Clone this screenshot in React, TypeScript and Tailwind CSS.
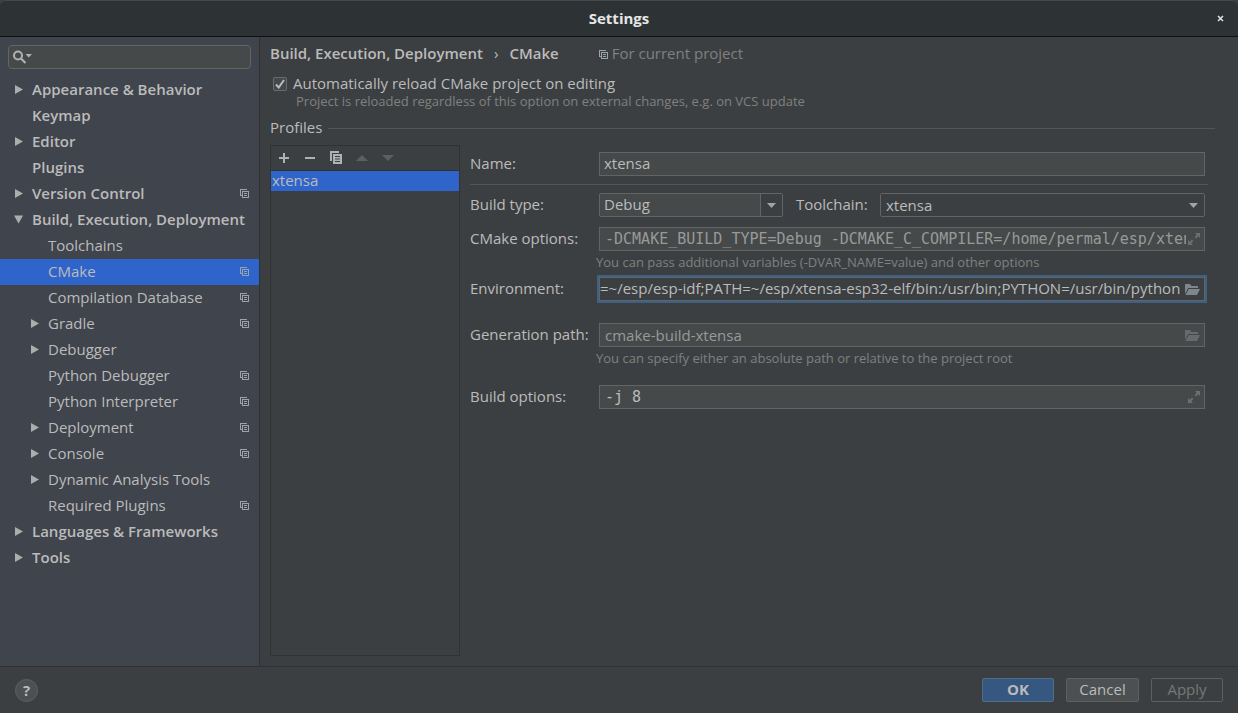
import React, { useState } from 'react';

type TreeItem = {
  label: string;
  level: number;
  arrow?: 'right' | 'down';
  perProject?: boolean;
};

const TREE: TreeItem[] = [
  { label: 'Appearance & Behavior', level: 0, arrow: 'right' },
  { label: 'Keymap', level: 0 },
  { label: 'Editor', level: 0, arrow: 'right' },
  { label: 'Plugins', level: 0 },
  { label: 'Version Control', level: 0, arrow: 'right', perProject: true },
  { label: 'Build, Execution, Deployment', level: 0, arrow: 'down' },
  { label: 'Toolchains', level: 1 },
  { label: 'CMake', level: 1, perProject: true },
  { label: 'Compilation Database', level: 1, perProject: true },
  { label: 'Gradle', level: 1, arrow: 'right', perProject: true },
  { label: 'Debugger', level: 1, arrow: 'right' },
  { label: 'Python Debugger', level: 1, perProject: true },
  { label: 'Python Interpreter', level: 1, perProject: true },
  { label: 'Deployment', level: 1, arrow: 'right', perProject: true },
  { label: 'Console', level: 1, arrow: 'right', perProject: true },
  { label: 'Dynamic Analysis Tools', level: 1, arrow: 'right' },
  { label: 'Required Plugins', level: 1, perProject: true },
  { label: 'Languages & Frameworks', level: 0, arrow: 'right' },
  { label: 'Tools', level: 0, arrow: 'right' },
];

/** Small "stored per project" marker */
function ProjectIcon({ className = '' }: { className?: string }) {
  return (
    <svg width="9" height="9" viewBox="0 0 9 9" className={className} aria-hidden="true">
      <path d="M0 0h7v1H1v5h1v1H0z" fill="currentColor" />
      <path d="M2 2h7v7H2zM3 3v5h5V3z" fill="currentColor" fillRule="evenodd" />
      <path d="M4 4h3v1H4zM4 6h3v1H4z" fill="currentColor" />
    </svg>
  );
}

function TreeArrow({ direction }: { direction?: 'right' | 'down' }) {
  return (
    <svg width="9" height="9" viewBox="0 0 9 9" className="shrink-0 text-[#adadad]" aria-hidden="true">
      {direction === 'right' && <path d="M1 0L9 4.5L1 9z" fill="currentColor" />}
      {direction === 'down' && <path d="M0 0.5H9L4.5 8.5z" fill="currentColor" />}
    </svg>
  );
}

function ChevronIcon() {
  return (
    <svg width="9" height="5" viewBox="0 0 9 5" className="text-[#a0a4a6]" aria-hidden="true">
      <path d="M0 0h9L4.5 5z" fill="currentColor" />
    </svg>
  );
}

function ExpandIcon() {
  return (
    <svg width="12" height="12" viewBox="0 0 12 12" aria-hidden="true">
      <path d="M7 0h5v5l-1.700-1.700L8 5.600L6.600 4.200L8.700 1.700z" fill="currentColor" />
      <path d="M0 7l1.700 1.700L4 6.400L5.400 7.800L3.300 10.300L5 12H0z" fill="currentColor" />
    </svg>
  );
}

function FolderIcon() {
  return (
    <svg width="15" height="11" viewBox="0 0 15 11" aria-hidden="true">
      <path d="M0 0h5l1.500 2H13v2H3.200L0 10z" fill="currentColor" />
      <path d="M3.700 5H15l-3 6H0.500z" fill="currentColor" />
    </svg>
  );
}

function ToolbarButton({ label, disabled, children }: { label: string; disabled?: boolean; children: React.ReactNode }) {
  return (
    <button
      aria-label={label}
      disabled={disabled}
      className="flex h-6 w-[26px] items-center justify-center text-[#afb1b3] disabled:text-[#5c5e60]"
    >
      {children}
    </button>
  );
}

function Hint({ children }: { children: React.ReactNode }) {
  return <p className="-ml-[3px] h-[22px] text-[13px] leading-[22px] text-[#808080]">{children}</p>;
}

export default function App() {
  const [selected, setSelected] = useState('CMake');
  const [autoReload, setAutoReload] = useState(true);

  return (
    <div className="flex h-screen flex-col overflow-hidden bg-[#3c3f41] font-['Open_Sans','Noto_Sans',sans-serif] text-[15px] leading-5 text-[#bbbbbb]">
      {/* title bar */}
      <header className="flex h-[37px] shrink-0 items-center rounded-t-md border-t border-b border-t-[#45494a] border-b-[#101010] bg-[#2d3234] px-2">
        <span className="w-5" />
        <h1 className="flex-1 pb-[2px] text-center font-bold text-[#e6e6e6]">Settings</h1>
        <button aria-label="Close" className="flex w-5 justify-center text-[#e6e6e6]">
          <svg width="7" height="7" viewBox="0 0 7 7" aria-hidden="true">
            <path d="M1 1l5 5M6 1L1 6" stroke="currentColor" strokeWidth="1.500" />
          </svg>
        </button>
      </header>

      <div className="flex min-h-0 flex-1">
        {/* sidebar */}
        <aside className="w-[260px] shrink-0 border-r border-[#323232] bg-[#40444c]">
          <div className="px-2 pt-2 pb-2">
            <label className="flex h-6 items-center rounded-sm border border-[#646464] bg-[#45494a] px-1">
              <svg width="19" height="14" viewBox="0 0 19 14" className="text-[#afb1b3]" aria-hidden="true">
                <circle cx="5" cy="5.500" r="4" fill="none" stroke="currentColor" strokeWidth="2" />
                <path d="M8 8.500l4.500 4.500" stroke="currentColor" strokeWidth="2.200" />
                <path d="M12.500 4H19l-3.250 3.500z" fill="currentColor" />
              </svg>
              <input type="text" aria-label="Search settings" className="min-w-0 flex-1 bg-transparent pl-1 outline-none" />
            </label>
          </div>
          <nav>
            {TREE.map((item) => (
              <button
                key={item.label}
                onClick={() => setSelected(item.label)}
                className={`flex h-[26px] w-full items-center gap-[9px] pr-[10px] pb-px text-left whitespace-nowrap ${
                  item.level === 0 ? 'pl-[14px] font-semibold' : 'pl-[30px]'
                } ${selected === item.label ? 'bg-[#2f65ca]' : ''}`}
              >
                <TreeArrow direction={item.arrow} />
                <span className="flex-1 pb-px">{item.label}</span>
                {item.perProject && <ProjectIcon className="text-[#9aa4ad]" />}
              </button>
            ))}
          </nav>
        </aside>

        {/* settings page */}
        <main className="flex min-w-0 flex-1 flex-col pr-[23px] pb-[10px] pl-[10px]">
          <div className="flex h-[35px] shrink-0 items-center">
            <h2 className="flex gap-[11px] pb-[3px] font-semibold">
              <span>Build, Execution, Deployment</span>
              <span className="font-normal">›</span>
              <span>CMake</span>
            </h2>
            <ProjectIcon className="mr-1 ml-10 text-[#9aa4ad]" />
            <span className="pb-[3px] text-[#808080]">For current project</span>
          </div>

          <label className="flex h-6 shrink-0 items-center gap-[6px] pl-[3px]">
            <span className="grid place-items-center">
              <input
                type="checkbox"
                checked={autoReload}
                onChange={(e) => setAutoReload(e.target.checked)}
                className="col-start-1 row-start-1 size-[14px] appearance-none rounded-xs border border-[#6b6b6b] bg-[#43494a]"
              />
              {autoReload && (
                <svg width="10" height="10" viewBox="0 0 10 10" className="pointer-events-none col-start-1 row-start-1" aria-hidden="true">
                  <path d="M1 5.500L3.700 8.500L9 1" fill="none" stroke="#bbbbbb" strokeWidth="2" />
                </svg>
              )}
            </span>
            <span className="pb-[2px]">Automatically reload CMake project on editing</span>
          </label>
          <p className="h-3 shrink-0 pl-[26px] text-[13px] leading-[10px] text-[#808080]">
            Project is reloaded regardless of this option on external changes, e.g. on VCS update
          </p>

          <div className="flex h-[37px] shrink-0 items-center gap-[6px] pt-[7px] pb-1">
            <h3 className="pb-[2px]">Profiles</h3>
            <span className="h-px flex-1 bg-[#555555]" />
          </div>

          <div className="flex min-h-0 flex-1 gap-[10px]">
            {/* profile list */}
            <section className="w-[190px] shrink-0 border border-[#323232]">
              <div className="flex h-[25px] border-b border-[#323232]">
                <ToolbarButton label="Add">
                  <svg width="10" height="10" viewBox="0 0 10 10"><path d="M4 0h2v4h4v2H6v4H4V6H0V4h4z" fill="currentColor" /></svg>
                </ToolbarButton>
                <ToolbarButton label="Remove">
                  <svg width="10" height="10" viewBox="0 0 10 10"><path d="M0 4h10v2H0z" fill="currentColor" /></svg>
                </ToolbarButton>
                <ToolbarButton label="Copy">
                  <svg width="12" height="14" viewBox="0 0 12 14">
                    <path d="M0 0h9v2H2v8H0z" fill="currentColor" />
                    <path d="M3 3h9v10H3zM5 5v1h5V5zM5 7.500v1h5v-1zM5 10v1h5v-1z" fill="currentColor" fillRule="evenodd" />
                  </svg>
                </ToolbarButton>
                <ToolbarButton label="Move up" disabled>
                  <svg width="12" height="6" viewBox="0 0 12 6"><path d="M0 6h12L6 0z" fill="currentColor" /></svg>
                </ToolbarButton>
                <ToolbarButton label="Move down" disabled>
                  <svg width="12" height="6" viewBox="0 0 12 6"><path d="M0 0h12L6 6z" fill="currentColor" /></svg>
                </ToolbarButton>
              </div>
              <ul>
                <li className="h-5 bg-[#2f65ca] px-px leading-[18px]">xtensa</li>
              </ul>
            </section>

            {/* profile form */}
            <form className="flex min-w-0 flex-1 flex-col pt-[7px]" onSubmit={(e) => e.preventDefault()}>
              <div className="flex h-6 pr-[10px]">
                <label htmlFor="name" className="w-[129px] shrink-0 leading-[22px]">Name:</label>
                <input id="name" defaultValue="xtensa" className="h-6 min-w-0 flex-1 border border-[#646464] bg-[#45494a] px-1 pb-[2px] outline-none" />
              </div>
              <hr className="mt-2 mr-[7px] mb-2 border-[#555555]" />

              <div className="flex h-6 pr-[10px]">
                <label htmlFor="build-type" className="w-[129px] shrink-0 leading-[22px]">Build type:</label>
                <div className="grid h-6 w-[184px] shrink-0 grid-cols-[1fr_22px] rounded-xs border border-[#646464]">
                  <select id="build-type" className="col-span-2 col-start-1 row-start-1 appearance-none bg-[#45494a] px-1 pb-[2px] outline-none">
                    <option>Debug</option>
                    <option>Release</option>
                  </select>
                  <span className="pointer-events-none col-start-2 row-start-1 flex items-center justify-center border-l border-[#646464] bg-[#3c3f41]">
                    <ChevronIcon />
                  </span>
                </div>
                <label htmlFor="toolchain" className="w-[97px] shrink-0 pl-[13px] leading-[22px]">Toolchain:</label>
                <div className="grid h-6 min-w-0 flex-1 grid-cols-[1fr_22px] rounded-xs border border-[#646464]">
                  <select id="toolchain" className="col-span-2 col-start-1 row-start-1 appearance-none bg-[#3c3f41] px-[5px] outline-none">
                    <option>xtensa</option>
                    <option>Default</option>
                  </select>
                  <span className="pointer-events-none col-start-2 row-start-1 flex items-center justify-center">
                    <ChevronIcon />
                  </span>
                </div>
              </div>

              <div className="mt-[10px] flex pr-[10px]">
                <label htmlFor="cmake-options" className="w-[129px] shrink-0 leading-[22px]">CMake options:</label>
                <div className="min-w-0 flex-1">
                  <div className="flex h-6 items-center border border-[#646464] bg-[#45494a] pr-1 pl-[5px]">
                    <input
                      id="cmake-options"
                      defaultValue="-DCMAKE_BUILD_TYPE=Debug -DCMAKE_C_COMPILER=/home/permal/esp/xtensa-esp32-elf/bin/xtensa-esp32-elf-gcc"
                      className="min-w-0 flex-1 bg-transparent font-['DejaVu_Sans_Mono',monospace] text-[#999999] outline-none"
                    />
                    <button type="button" aria-label="Expand" className="pl-[2px] text-[#6b6f71]"><ExpandIcon /></button>
                  </div>
                  <Hint>You can pass additional variables (-DVAR_NAME=value) and other options</Hint>
                </div>
              </div>

              <div className="mt-1 flex pr-[10px]">
                <label htmlFor="environment" className="w-[129px] shrink-0 leading-[22px]">Environment:</label>
                <div className="flex h-6 min-w-0 flex-1 items-center border border-[#646464] pr-1 ring-2 ring-[#3d6185]">
                  <input
                    id="environment"
                    defaultValue="=~/esp/esp-idf;PATH=~/esp/xtensa-esp32-elf/bin:/usr/bin;PYTHON=/usr/bin/python"
                    className="min-w-0 flex-1 bg-transparent pb-[2px] outline-none"
                  />
                  <button type="button" aria-label="Edit variables" className="text-[#7f868c]"><FolderIcon /></button>
                </div>
              </div>

              <div className="mt-[22px] flex pr-[10px]">
                <label htmlFor="generation-path" className="w-[129px] shrink-0 leading-[22px]">Generation path:</label>
                <div className="min-w-0 flex-1">
                  <div className="flex h-6 items-center border border-[#646464] bg-[#45494a] pr-1 pl-[5px]">
                    <input
                      id="generation-path"
                      defaultValue="cmake-build-xtensa"
                      className="min-w-0 flex-1 bg-transparent text-[#999999] outline-none"
                    />
                    <button type="button" aria-label="Browse" className="pl-1 text-[#646a6e]"><FolderIcon /></button>
                  </div>
                  <Hint>You can specify either an absolute path or relative to the project root</Hint>
                </div>
              </div>

              <div className="mt-4 flex pr-[10px]">
                <label htmlFor="build-options" className="w-[129px] shrink-0 leading-[22px]">Build options:</label>
                <div className="flex h-6 min-w-0 flex-1 items-center border border-[#646464] bg-[#45494a] pr-1 pl-[5px]">
                  <input
                    id="build-options"
                    defaultValue="-j 8"
                    className="min-w-0 flex-1 bg-transparent font-['DejaVu_Sans_Mono',monospace] outline-none"
                  />
                  <button type="button" aria-label="Expand" className="pl-[2px] text-[#6b6f71]"><ExpandIcon /></button>
                </div>
              </div>
            </form>
          </div>
        </main>
      </div>

      {/* dialog buttons */}
      <footer className="flex h-[47px] shrink-0 items-center gap-3 border-t border-[#323232] pr-[15px] pl-[15px]">
        <button aria-label="Help" className="mr-auto flex size-[23px] items-center justify-center rounded-full border border-[#5e6060] bg-[#4c5052] font-bold">
          ?
        </button>
        <button className="h-6 w-[72px] rounded-xs border border-[#4c708c] bg-[#365880] pb-[2px] leading-5 font-bold">OK</button>
        <button className="h-6 w-[73px] rounded-xs border border-[#5e6060] bg-[#4c5052] pb-[2px] leading-5">Cancel</button>
        <button disabled className="h-6 w-[72px] rounded-xs border border-[#5e6060] pb-[2px] leading-5 text-[#777777]">Apply</button>
      </footer>
    </div>
  );
}
